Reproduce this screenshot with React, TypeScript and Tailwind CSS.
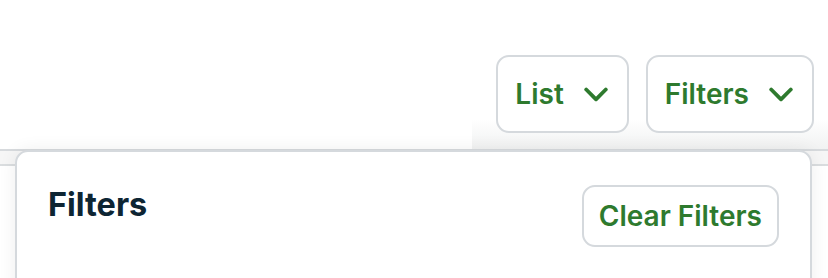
import React from "react";

function Chevron() {
  return (
    <svg width="24" height="15" viewBox="0 0 24 15" fill="none" className="shrink-0">
      <polyline
        points="2.2,2.5 12,12.3 21.8,2.5"
        stroke="#2e7a2e"
        strokeWidth="3.8"
        strokeLinecap="round"
        strokeLinejoin="round"
      />
    </svg>
  );
}

function DropButton({ label }: { label: string }) {
  return (
    <button className="flex h-[78px] items-center gap-[20px] rounded-[13px] border-2 border-[#d5d9dd] bg-white pl-[17px] pr-[19px] text-[28px] font-semibold text-[#2e7a2e]">
      <span>{label}</span>
      <Chevron />
    </button>
  );
}

export default function App() {
  return (
    <div
      className="relative h-[278px] w-full overflow-hidden bg-white"
      style={{ fontFamily: "Inter, 'Noto Sans', sans-serif" }}
    >
      <div className="relative flex h-[149px] items-start justify-end pr-[14px] pt-[55px]">
        <div className="absolute bottom-0 left-[472px] right-0 h-[30px] bg-gradient-to-b from-white to-[#f1f2f2]" />
        <div className="relative z-10 flex gap-[17px]">
          <DropButton label="List" />
          <DropButton label="Filters" />
        </div>
      </div>
      <div className="h-[2px] bg-[#d7dadd]" />
      <div className="h-[15px] border-b-2 border-[#dadddf] bg-[#f6f6f6]" />
      <div className="absolute left-[15px] top-[150px] h-[160px] w-[797px] rounded-t-[13px] border-2 border-[#d5d9dd] bg-white shadow-[0_0_18px_rgba(0,0,0,0.07)]">
        <div className="flex items-start justify-between pl-[31px] pr-[31px] pt-[33px]">
          <h2 className="mt-[1px] text-[32.4px] font-bold leading-[1.2] text-[#0d2533]">
            Filters
          </h2>
          <button className="flex h-[62px] items-center rounded-[13px] border-2 border-[#d5d9dd] bg-white px-[15px] text-[28px] font-semibold text-[#2e7a2e]">
            Clear Filters
          </button>
        </div>
      </div>
    </div>
  );
}
